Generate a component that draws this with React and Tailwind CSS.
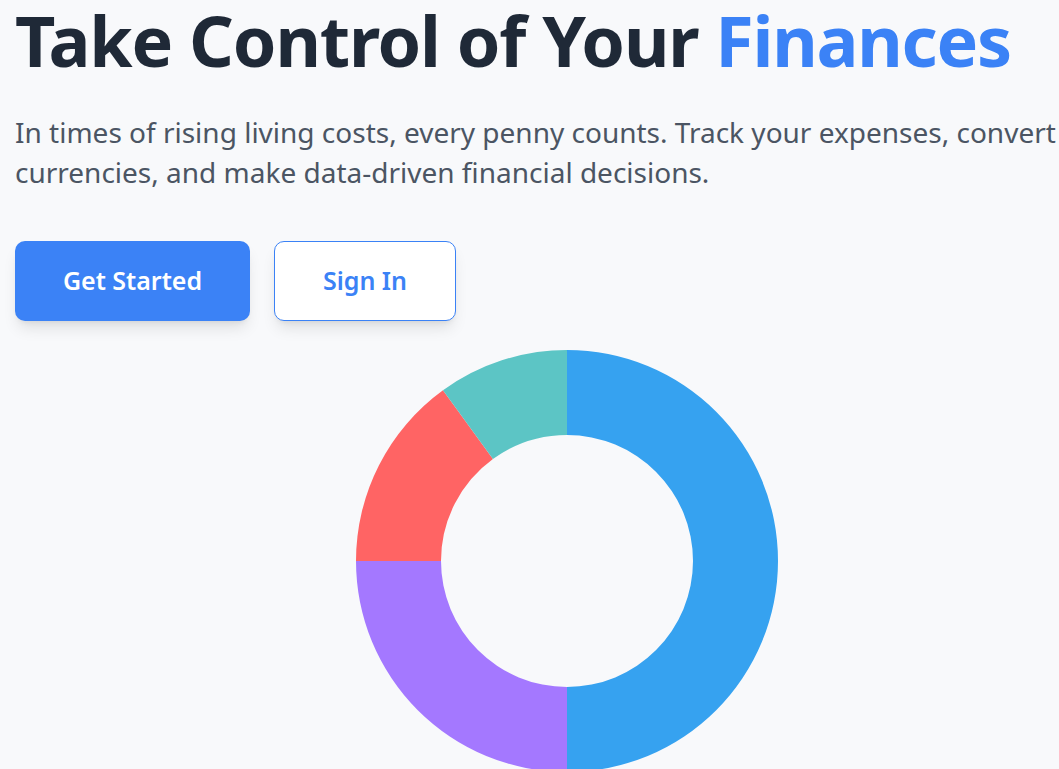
import React from "react";

function Donut() {
  const cx = 211, cy = 211, R = 211, r = 126;
  const data = [
    { v: 50, c: "#36A2F0" },
    { v: 25, c: "#A478FF" },
    { v: 15, c: "#FF6464" },
    { v: 10, c: "#5CC5C5" },
  ];
  let a0 = -Math.PI / 2;
  const paths = data.map((d, i) => {
    const a1 = a0 + (d.v / 100) * Math.PI * 2;
    const large = a1 - a0 > Math.PI ? 1 : 0;
    const p = (rad, a) => [cx + rad * Math.cos(a), cy + rad * Math.sin(a)];
    const [x0, y0] = p(R, a0);
    const [x1, y1] = p(R, a1);
    const [x2, y2] = p(r, a1);
    const [x3, y3] = p(r, a0);
    const dstr = `M${x0} ${y0} A${R} ${R} 0 ${large} 1 ${x1} ${y1} L${x2} ${y2} A${r} ${r} 0 ${large} 0 ${x3} ${y3} Z`;
    a0 = a1;
    return <path key={i} d={dstr} fill={d.c} />;
  });
  return (
    <svg width="422" height="422" viewBox="0 0 422 422">
      {paths}
    </svg>
  );
}

export default function App() {
  return (
    <div className="min-h-screen w-full overflow-hidden bg-[#f8f9fb]" style={{ fontFamily: '"Noto Sans", sans-serif' }}>
      <div className="w-[1119px] pl-[15px]">
        <h1 className="w-fit text-[70px] font-bold leading-[80px] text-[#1f2937] tracking-[-1.2px]">
          Take Control of Your <span className="text-[#3b82f6]">Finances</span>
        </h1>
        <p className="mt-[32px] text-[28px] leading-[40px] text-[#4b5563]">
          In times of rising living costs, every penny counts. Track your expenses, convert currencies, and make data-driven financial decisions.
        </p>
        <div className="mt-[49px] flex gap-[24px]">
          <button className="h-[80px] w-[235px] rounded-[10px] bg-[#3b82f6] text-[25px] font-semibold text-white shadow-lg">
            Get Started
          </button>
          <button className="h-[80px] w-[182px] rounded-[10px] border border-[#3b82f6] bg-white text-[25px] font-semibold text-[#3b82f6] shadow-lg">
            Sign In
          </button>
        </div>
        <div className="mt-[29px] flex justify-center">
          <Donut />
        </div>
      </div>
    </div>
  );
}
